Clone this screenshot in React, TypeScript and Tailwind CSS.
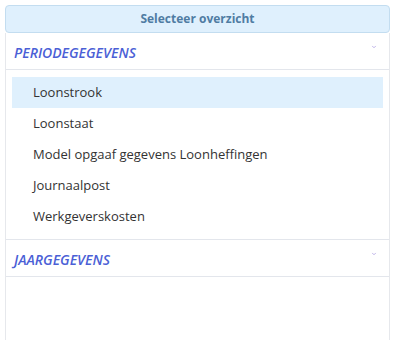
import { ChevronDown } from "lucide-react"

const periode = [
  { label: "Loonstrook", active: true },
  { label: "Loonstaat", active: false },
  { label: "Model opgaaf gegevens Loonheffingen", active: false },
  { label: "Journaalpost", active: false },
  { label: "Werkgeverskosten", active: false },
]

function SectionHeader({ title }: { title: string }) {
  return (
    <div className="relative flex items-center h-[37px] pl-[8px] pr-[12px] border-b border-[#e3e6ec]">
      <span className="pt-[2px] italic font-semibold text-[14px] text-[#4b5fd6]">{title}</span>
      <ChevronDown className="absolute right-[12px] top-[11px] w-[6px] h-[6px] text-[#a99be0]" strokeWidth={3} />
    </div>
  )
}

export default function App() {
  return (
    <div className="h-[340px] bg-white px-[5px] pt-[5px] font-['Open_Sans',sans-serif] overflow-hidden">
      <button className="w-full h-[28px] rounded-[4px] bg-[#dff0fd] border border-[#c3ddf0] text-[12px] font-bold text-[#4f7ca3]">
        Selecteer overzicht
      </button>
      <div className="h-[320px] border-x border-[#e6e8ec]">
        <SectionHeader title="PERIODEGEGEVENS" />
        <ul className="py-[7px] px-[6px]">
          {periode.map((item) => (
            <li
              key={item.label}
              className={`h-[31px] flex items-center pl-[21px] pt-[1px] text-[13px] text-[#333] ${
                item.active ? "bg-[#dff0fd]" : ""
              }`}
            >
              {item.label}
            </li>
          ))}
        </ul>
        <div className="border-t border-[#e3e6ec]" />
        <SectionHeader title="JAARGEGEVENS" />
      </div>
    </div>
  )
}
